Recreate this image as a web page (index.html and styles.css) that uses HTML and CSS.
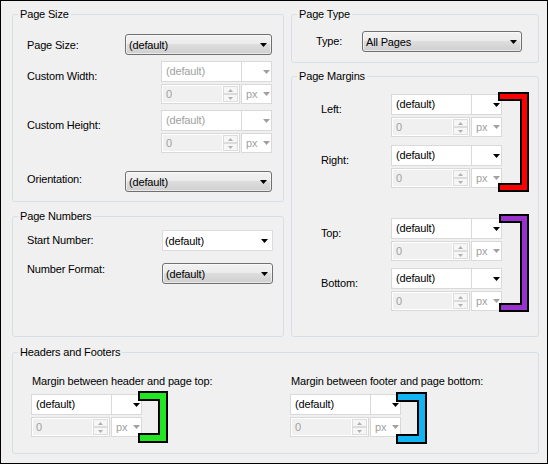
FILE: index.html
```html
<!DOCTYPE html>
<html>
<head>
<meta charset="utf-8">
<title>Page Setup</title>
<link rel="stylesheet" href="styles.css">
</head>
<body>
<div class="dialog">
  <div class="top">
    <div class="col col-left">
      <fieldset class="group g-size">
        <legend>Page Size</legend>
        <div class="row ps-r1">
          <span class="lbl">Page Size:</span>
          <div class="cbtn w147"><span>(default)</span><svg class="arr" width="7" height="4" viewBox="0 0 7 4"><path d="M0 0H7L3.5 4Z"/></svg></div>
        </div>
        <div class="row ps-r2">
          <span class="lbl">Custom Width:</span>
          <div class="stack dis">
            <div class="ecombo"><span class="ec-text">(default)</span><span class="ec-unit"><svg class="arr" width="7" height="4" viewBox="0 0 7 4"><path d="M0 0H7L3.5 4Z"/></svg></span></div>
            <div class="spinrow">
              <div class="spin"><span class="spin-text">0</span><span class="spin-btns"><span class="sb"><svg width="5" height="3" viewBox="0 0 5 3"><path d="M2.5 0L5 3H0Z"/></svg></span><span class="sb"><svg width="5" height="3" viewBox="0 0 5 3"><path d="M0 0H5L2.5 3Z"/></svg></span></span></div>
              <div class="unitbox"><span>px</span><svg class="arr" width="7" height="4" viewBox="0 0 7 4"><path d="M0 0H7L3.5 4Z"/></svg></div>
            </div>
          </div>
        </div>
        <div class="row ps-r3">
          <span class="lbl">Custom Height:</span>
          <div class="stack dis">
            <div class="ecombo"><span class="ec-text">(default)</span><span class="ec-unit"><svg class="arr" width="7" height="4" viewBox="0 0 7 4"><path d="M0 0H7L3.5 4Z"/></svg></span></div>
            <div class="spinrow">
              <div class="spin"><span class="spin-text">0</span><span class="spin-btns"><span class="sb"><svg width="5" height="3" viewBox="0 0 5 3"><path d="M2.5 0L5 3H0Z"/></svg></span><span class="sb"><svg width="5" height="3" viewBox="0 0 5 3"><path d="M0 0H5L2.5 3Z"/></svg></span></span></div>
              <div class="unitbox"><span>px</span><svg class="arr" width="7" height="4" viewBox="0 0 7 4"><path d="M0 0H7L3.5 4Z"/></svg></div>
            </div>
          </div>
        </div>
        <div class="row ps-r4">
          <span class="lbl">Orientation:</span>
          <div class="cbtn w147"><span>(default)</span><svg class="arr" width="7" height="4" viewBox="0 0 7 4"><path d="M0 0H7L3.5 4Z"/></svg></div>
        </div>
      </fieldset>
      <fieldset class="group g-num">
        <legend>Page Numbers</legend>
        <div class="row pn-r1">
          <span class="lbl">Start Number:</span>
          <div class="scombo"><span>(default)</span><svg class="arr" width="7" height="4" viewBox="0 0 7 4"><path d="M0 0H7L3.5 4Z"/></svg></div>
        </div>
        <div class="row pn-r2">
          <span class="lbl">Number Format:</span>
          <div class="cbtn w111"><span>(default)</span><svg class="arr" width="7" height="4" viewBox="0 0 7 4"><path d="M0 0H7L3.5 4Z"/></svg></div>
        </div>
      </fieldset>
    </div>
    <div class="col col-right">
      <fieldset class="group g-type">
        <legend>Page Type</legend>
        <div class="row pt-r1">
          <span class="lbl">Type:</span>
          <div class="cbtn w160"><span>All Pages</span><svg class="arr" width="7" height="4" viewBox="0 0 7 4"><path d="M0 0H7L3.5 4Z"/></svg></div>
        </div>
      </fieldset>
      <fieldset class="group g-marg">
        <legend>Page Margins</legend>
        <div class="pair pair-lr">
          <div class="row">
            <span class="lbl">Left:</span>
            <div class="stack">
              <div class="ecombo"><span class="ec-text">(default)</span><span class="ec-unit"><svg class="arr" width="7" height="4" viewBox="0 0 7 4"><path d="M0 0H7L3.5 4Z"/></svg></span></div>
              <div class="spinrow">
                <div class="spin"><span class="spin-text">0</span><span class="spin-btns"><span class="sb"><svg width="5" height="3" viewBox="0 0 5 3"><path d="M2.5 0L5 3H0Z"/></svg></span><span class="sb"><svg width="5" height="3" viewBox="0 0 5 3"><path d="M0 0H5L2.5 3Z"/></svg></span></span></div>
                <div class="unitbox"><span>px</span><svg class="arr" width="7" height="4" viewBox="0 0 7 4"><path d="M0 0H7L3.5 4Z"/></svg></div>
              </div>
            </div>
          </div>
          <div class="row row-b">
            <span class="lbl">Right:</span>
            <div class="stack">
              <div class="ecombo"><span class="ec-text">(default)</span><span class="ec-unit"><svg class="arr" width="7" height="4" viewBox="0 0 7 4"><path d="M0 0H7L3.5 4Z"/></svg></span></div>
              <div class="spinrow">
                <div class="spin"><span class="spin-text">0</span><span class="spin-btns"><span class="sb"><svg width="5" height="3" viewBox="0 0 5 3"><path d="M2.5 0L5 3H0Z"/></svg></span><span class="sb"><svg width="5" height="3" viewBox="0 0 5 3"><path d="M0 0H5L2.5 3Z"/></svg></span></span></div>
                <div class="unitbox"><span>px</span><svg class="arr" width="7" height="4" viewBox="0 0 7 4"><path d="M0 0H7L3.5 4Z"/></svg></div>
              </div>
            </div>
          </div>
          <svg class="br br-red" width="31" height="100" viewBox="0 0 31 100"><polygon points="0,0 31,0 31,100 0,100 0,91 22,91 22,9 0,9" fill="#000"/><polygon points="2,2 29,2 29,98 2,98 2,93 24,93 24,7 2,7" fill="#ff0000"/></svg>
        </div>
        <div class="pair pair-tb">
          <div class="row">
            <span class="lbl">Top:</span>
            <div class="stack">
              <div class="ecombo"><span class="ec-text">(default)</span><span class="ec-unit"><svg class="arr" width="7" height="4" viewBox="0 0 7 4"><path d="M0 0H7L3.5 4Z"/></svg></span></div>
              <div class="spinrow">
                <div class="spin"><span class="spin-text">0</span><span class="spin-btns"><span class="sb"><svg width="5" height="3" viewBox="0 0 5 3"><path d="M2.5 0L5 3H0Z"/></svg></span><span class="sb"><svg width="5" height="3" viewBox="0 0 5 3"><path d="M0 0H5L2.5 3Z"/></svg></span></span></div>
                <div class="unitbox"><span>px</span><svg class="arr" width="7" height="4" viewBox="0 0 7 4"><path d="M0 0H7L3.5 4Z"/></svg></div>
              </div>
            </div>
          </div>
          <div class="row row-b2">
            <span class="lbl">Bottom:</span>
            <div class="stack">
              <div class="ecombo"><span class="ec-text">(default)</span><span class="ec-unit"><svg class="arr" width="7" height="4" viewBox="0 0 7 4"><path d="M0 0H7L3.5 4Z"/></svg></span></div>
              <div class="spinrow">
                <div class="spin"><span class="spin-text">0</span><span class="spin-btns"><span class="sb"><svg width="5" height="3" viewBox="0 0 5 3"><path d="M2.5 0L5 3H0Z"/></svg></span><span class="sb"><svg width="5" height="3" viewBox="0 0 5 3"><path d="M0 0H5L2.5 3Z"/></svg></span></span></div>
                <div class="unitbox"><span>px</span><svg class="arr" width="7" height="4" viewBox="0 0 7 4"><path d="M0 0H7L3.5 4Z"/></svg></div>
              </div>
            </div>
          </div>
          <svg class="br br-purple" width="30" height="98" viewBox="0 0 30 98"><polygon points="0,0 30,0 30,98 0,98 0,89 21,89 21,9 0,9" fill="#000"/><polygon points="2,2 28,2 28,96 2,96 2,91 23,91 23,7 2,7" fill="#9932cc"/></svg>
        </div>
      </fieldset>
    </div>
  </div>
  <fieldset class="group g-hf">
    <legend>Headers and Footers</legend>
    <div class="hf-cols">
      <div class="hf-col hf-left">
        <div class="hf-title">Margin between header and page top:</div>
        <div class="stackwrap">
          <div class="stack">
            <div class="ecombo"><span class="ec-text">(default)</span><span class="ec-unit"><svg class="arr" width="7" height="4" viewBox="0 0 7 4"><path d="M0 0H7L3.5 4Z"/></svg></span></div>
            <div class="spinrow">
              <div class="spin"><span class="spin-text">0</span><span class="spin-btns"><span class="sb"><svg width="5" height="3" viewBox="0 0 5 3"><path d="M2.5 0L5 3H0Z"/></svg></span><span class="sb"><svg width="5" height="3" viewBox="0 0 5 3"><path d="M0 0H5L2.5 3Z"/></svg></span></span></div>
              <div class="unitbox"><span>px</span><svg class="arr" width="7" height="4" viewBox="0 0 7 4"><path d="M0 0H7L3.5 4Z"/></svg></div>
            </div>
          </div>
          <svg class="br br-green" width="30" height="52" viewBox="0 0 30 52"><polygon points="0,0 30,0 30,52 0,52 0,42 20,42 20,10 0,10" fill="#000"/><polygon points="2,2 28,2 28,50 2,50 2,44 22,44 22,8 2,8" fill="#22e622"/></svg>
        </div>
      </div>
      <div class="hf-col">
        <div class="hf-title">Margin between footer and page bottom:</div>
        <div class="stackwrap">
          <div class="stack">
            <div class="ecombo"><span class="ec-text">(default)</span><span class="ec-unit"><svg class="arr" width="7" height="4" viewBox="0 0 7 4"><path d="M0 0H7L3.5 4Z"/></svg></span></div>
            <div class="spinrow">
              <div class="spin"><span class="spin-text">0</span><span class="spin-btns"><span class="sb"><svg width="5" height="3" viewBox="0 0 5 3"><path d="M2.5 0L5 3H0Z"/></svg></span><span class="sb"><svg width="5" height="3" viewBox="0 0 5 3"><path d="M0 0H5L2.5 3Z"/></svg></span></span></div>
              <div class="unitbox"><span>px</span><svg class="arr" width="7" height="4" viewBox="0 0 7 4"><path d="M0 0H7L3.5 4Z"/></svg></div>
            </div>
          </div>
          <svg class="br br-blue" width="31" height="52" viewBox="0 0 31 52"><polygon points="0,0 31,0 31,52 0,52 0,42 21,42 21,10 0,10" fill="#000"/><polygon points="2,2 29,2 29,50 2,50 2,44 23,44 23,8 2,8" fill="#12b4f2"/></svg>
        </div>
      </div>
    </div>
  </fieldset>
</div>
</body>
</html>
```

FILE: styles.css
```css
* { box-sizing: border-box; }
html, body { margin: 0; padding: 0; }
body {
  width: 548px;
  height: 464px;
  overflow: hidden;
  background: #f0f0f0;
  font-family: "Liberation Sans", Arial, sans-serif;
  font-size: 11px;
  letter-spacing: -0.16px;
  color: #000;
}
.dialog {
  width: 548px;
  height: 464px;
  border: 1px solid #000;
  background: #f0f0f0;
  padding: 6px 0 0 11px;
}
.top {
  display: grid;
  grid-template-columns: 272px 248px;
  column-gap: 7px;
}
.col { display: flex; flex-direction: column; }
.col-left { row-gap: 7px; }
.col-right { row-gap: 6px; }

.group {
  margin: 0;
  padding: 0;
  border: 1px solid #d5dfe5;
  border-radius: 3px;
  min-width: 0;
}
.group > legend {
  margin-left: 5px;
  padding: 0 2px;
  line-height: 14px;
}
.g-size { height: 195px; }
.g-num { height: 128px; }
.g-type { height: 56px; }
.g-marg { height: 268px; }
.g-hf { width: 527px; height: 109px; margin-top: 8px; }

.row { display: flex; align-items: flex-start; }
.lbl { line-height: 14px; white-space: nowrap; flex: none; }

/* Page Size */
.g-size .row { padding-left: 14px; }
.ps-r1 { margin-top: 13px; }
.ps-r1 .lbl { width: 98px; margin-top: 4px; }
.ps-r2, .ps-r3 { margin-top: 6px; }
.ps-r2 .lbl, .ps-r3 .lbl { width: 134px; margin-top: 8px; }
.ps-r4 { margin-top: 18px; }
.ps-r4 .lbl { width: 98px; margin-top: 1px; }

/* Page Numbers */
.g-num .row { padding-left: 14px; }
.pn-r1 { margin-top: 7px; }
.pn-r1 .lbl { width: 135px; margin-top: 3px; }
.pn-r2 { margin-top: 12px; }
.pn-r2 .lbl { width: 135px; margin-top: -1px; }

/* Page Type */
.pt-r1 { margin-top: 10px; padding-left: 24px; }
.pt-r1 .lbl { width: 46px; margin-top: 3px; }

/* Page Margins */
.pair { position: relative; }
.g-marg .row { padding-left: 29px; }
.g-marg .lbl { width: 70px; margin-top: 8px; }
.pair-lr { margin-top: 11px; }
.pair-tb { margin-top: 30px; }
.row-b { margin-top: 8px; }
.row-b2 { margin-top: 7px; }

/* Headers and Footers */
.hf-cols { display: flex; padding-left: 18px; margin-top: 15px; }
.hf-left { width: 259px; }
.hf-title { line-height: 14px; white-space: nowrap; padding-left: 1px; }
.stackwrap { position: relative; width: 111px; margin-top: 6px; }

/* Brackets (annotation overlays) */
.br { position: absolute; display: block; }
.br-red { left: 206px; top: -2px; }
.br-purple { left: 207px; top: -4px; }
.br-green { left: 107px; top: -3px; }
.br-blue { left: 106px; top: -2px; }

/* Button-style combo */
.cbtn {
  height: 21px;
  display: flex;
  align-items: center;
  justify-content: space-between;
  border: 1px solid #707070;
  border-radius: 3px;
  padding: 0 4px 0 3px;
  background: linear-gradient(#f2f2f2 0%, #ebebeb 50%, #dddddd 50%, #cfcfcf 100%);
  box-shadow: inset 0 0 0 1px rgba(255, 255, 255, 0.55);
  white-space: nowrap;
}
.w147 { width: 147px; }
.w111 { width: 111px; }
.w160 { width: 160px; }
.arr { display: block; fill: #000; flex: none; }

/* Editable combo without unit */
.scombo {
  width: 111px;
  height: 21px;
  display: flex;
  align-items: center;
  justify-content: space-between;
  border: 1px solid #dcdcdc;
  background: #fff;
  padding: 0 4px 0 2px;
}

/* Value + unit stack */
.stack { width: 111px; display: flex; flex-direction: column; row-gap: 2px; }
.ecombo {
  height: 21px;
  display: flex;
  border: 1px solid #d9d9d9;
  background: #fff;
}
.ec-text { flex: 1; padding-left: 4px; line-height: 19px; white-space: nowrap; }
.ec-unit {
  width: 30px;
  border-left: 1px solid #d9d9d9;
  display: flex;
  align-items: center;
  justify-content: flex-end;
  padding-right: 1px;
}
.dis .ec-text { color: #a0a0a0; }
.dis .ec-unit .arr { fill: #a0a0a0; }

.spinrow { display: flex; column-gap: 1px; height: 20px; }
.spin {
  width: 79px;
  display: flex;
  border: 1px solid #d9d9d9;
  background: #fff;
  padding: 1px;
}
.spin-text {
  flex: 1;
  background: #f0f0f0;
  color: #a0a0a0;
  padding-left: 3px;
  line-height: 16px;
}
.spin-btns { width: 15px; display: flex; flex-direction: column; margin-left: 1px; }
.sb {
  flex: 1;
  border: 1px solid #dcdcdc;
  background: #f6f6f6;
  display: flex;
  align-items: center;
  justify-content: center;
}
.sb svg { display: block; fill: #b0b0b0; }
.unitbox {
  width: 31px;
  border: 1px solid #d9d9d9;
  background: #fff;
  display: flex;
  align-items: center;
  justify-content: space-between;
  padding: 0 1px 0 4px;
  color: #a0a0a0;
}
.unitbox .arr { fill: #a0a0a0; }
```
